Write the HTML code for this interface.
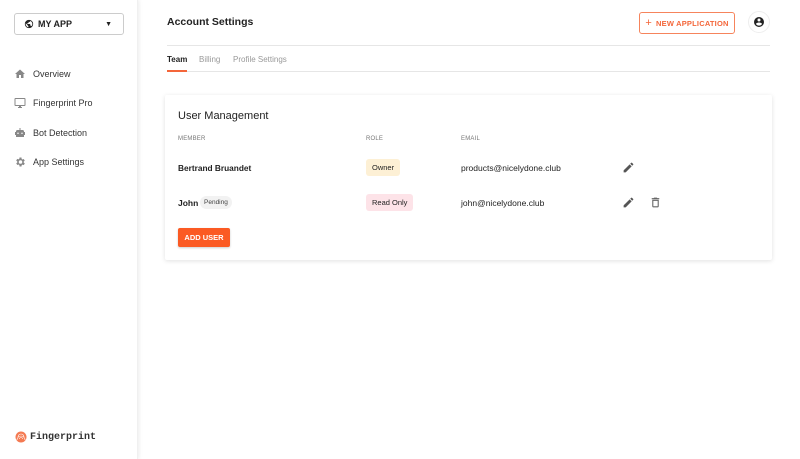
<!DOCTYPE html>
<html><head><style>
*{box-sizing:border-box;margin:0;padding:0}
body{width:800px;height:459px;position:relative;background:#fff;font-family:"Liberation Sans",sans-serif;color:#222;overflow:hidden}
.a{position:absolute}
.side{left:0;top:0;width:138px;height:459px;background:#fff;box-shadow:1px 0 4px rgba(0,0,0,.08);border-right:1px solid #f0f0f0}
.sel{left:14px;top:13px;width:110px;height:22px;border:1px solid #ccc;border-radius:3px;font-size:9px;font-weight:bold;display:flex;align-items:center;padding-left:9px}
.nav{left:14px;font-size:9px;color:#333;display:flex;align-items:center}
.nav svg{margin-right:7px}
.th{font-size:6px;color:#777;top:136px;letter-spacing:.2px}
.row{font-size:8.5px}
.chip{font-size:7.5px;padding:4px 6px;border-radius:3px}
</style></head><body>
<div class="a side"></div>
<div class="a sel"><svg width="10" height="10" viewBox="0 0 24 24"><path fill="#222" d="M12 2a10 10 0 100 20 10 10 0 000-20zm-1 17.9A8 8 0 014 12c0-.6.1-1.2.2-1.8L9 15v1a2 2 0 002 2v1.9zm6.9-2.5A2 2 0 0016 16h-1v-3a1 1 0 00-1-1H8v-2h2a1 1 0 001-1V7h2a2 2 0 002-2v-.4a8 8 0 012.9 12.8z"/></svg><span style="margin-left:4px">MY APP</span><span style="margin-left:auto;margin-right:11px;font-size:7px">▼</span></div>
<div class="a nav" style="top:68px"><svg width="12" height="12" viewBox="0 0 24 24"><path fill="#888" d="M10 20v-6h4v6h5v-8h3L12 3 2 12h3v8z"/></svg>Overview</div>
<div class="a nav" style="top:97px"><svg width="12" height="12" viewBox="0 0 24 24"><path fill="#888" d="M21 2H3a2 2 0 00-2 2v12a2 2 0 002 2h7v2H8v2h8v-2h-2v-2h7a2 2 0 002-2V4a2 2 0 00-2-2zm0 14H3V4h18z"/></svg>Fingerprint Pro</div>
<div class="a nav" style="top:127px"><svg width="12" height="12" viewBox="0 0 24 24"><path fill="#888" d="M11 2h2v4h4a3 3 0 013 3v1h2v6h-2v4H4v-4H2v-6h2V9a3 3 0 013-3h4zM8 11a1.5 1.5 0 100 3 1.5 1.5 0 000-3zm8 0a1.5 1.5 0 100 3 1.5 1.5 0 000-3z"/></svg>Bot Detection</div>
<div class="a nav" style="top:156px"><svg width="12" height="12" viewBox="0 0 24 24"><path fill="#888" d="M19.4 13a7 7 0 000-2l2.1-1.6-2-3.5-2.5 1a7 7 0 00-1.7-1L15 3h-4l-.4 2.7a7 7 0 00-1.7 1l-2.5-1-2 3.5L6.6 11a7 7 0 000 2l-2.1 1.6 2 3.5 2.5-1a7 7 0 001.7 1L11 21h4l.4-2.7a7 7 0 001.7-1l2.5 1 2-3.5zM13 15.5a3.5 3.5 0 110-7 3.5 3.5 0 010 7z"/></svg>App Settings</div>
<div class="a" style="left:15px;top:431px;display:flex;align-items:center;font-family:'Liberation Mono',monospace;font-size:10px;font-weight:bold;color:#333"><svg width="12" height="12" viewBox="0 0 12 12"><circle cx="6" cy="6" r="5.5" fill="#f47a52"/><path d="M3 6a3 3 0 016 0M4.5 8a1.5 1.5 0 013 0M2 9a4 4 0 018 0" stroke="#fff" stroke-width=".6" fill="none"/></svg><span style="margin-left:3px">Fingerprint</span></div>

<div class="a" style="left:167px;top:16px;font-size:10.5px;font-weight:bold;color:#222">Account Settings</div>
<div class="a" style="left:639px;top:12px;width:96px;height:22px;border:1px solid #f6845c;border-radius:3px;color:#f4663a;font-size:7.5px;font-weight:bold;display:flex;align-items:center;justify-content:center;letter-spacing:.2px"><span style="font-size:11px;margin-right:4px;font-weight:normal">+</span>NEW APPLICATION</div>
<div class="a" style="left:748px;top:11px;width:22px;height:22px;border-radius:50%;border:1px solid #eee;display:flex;align-items:center;justify-content:center"><svg width="12" height="12" viewBox="0 0 24 24"><path fill="#222" d="M12 2a10 10 0 100 20 10 10 0 000-20zm0 3a3 3 0 110 6 3 3 0 010-6zm0 14.2a7.2 7.2 0 01-6-3.2c0-2 4-3.1 6-3.1s6 1.1 6 3.1a7.2 7.2 0 01-6 3.2z"/></svg></div>
<div class="a" style="left:167px;top:45px;width:603px;height:1px;background:#e6e6e6"></div>
<div class="a" style="left:167px;top:55px;font-size:8px;font-weight:bold">Team</div>
<div class="a" style="left:199px;top:55px;font-size:8px;color:#999">Billing</div>
<div class="a" style="left:233px;top:55px;font-size:8px;color:#999">Profile Settings</div>
<div class="a" style="left:167px;top:71px;width:603px;height:1px;background:#e6e6e6"></div>
<div class="a" style="left:167px;top:70px;width:20px;height:2px;background:#f4663a"></div>

<div class="a" style="left:165px;top:95px;width:607px;height:165px;background:#fff;box-shadow:0 1px 5px rgba(0,0,0,.12);border-radius:2px"></div>
<div class="a" style="left:178px;top:110px;font-size:11px;color:#222">User Management</div>
<div class="a th" style="left:178px">MEMBER</div>
<div class="a th" style="left:366px">ROLE</div>
<div class="a th" style="left:461px">EMAIL</div>
<div class="a row" style="left:178px;top:163px;font-weight:bold;font-size:8.3px">Bertrand Bruandet</div>
<div class="a chip" style="left:366px;top:159px;background:#fdf0d5">Owner</div>
<div class="a row" style="left:461px;top:163px">products@nicelydone.club</div>
<div class="a row" style="left:178px;top:198px;font-weight:bold">John</div>
<div class="a" style="left:200px;top:196px;font-size:6.5px;background:#f2f2f2;border-radius:7px;padding:3px 4px;color:#444">Pending</div>
<div class="a chip" style="left:366px;top:194px;background:#fde3e8">Read Only</div>
<div class="a row" style="left:461px;top:198px">john@nicelydone.club</div>
<svg class="a" style="left:622px;top:161px" width="13" height="13" viewBox="0 0 24 24"><path fill="#555" d="M3 17.2V21h3.8L17.8 9.9l-3.7-3.7zM20.7 7a1 1 0 000-1.4l-2.3-2.3a1 1 0 00-1.4 0l-1.8 1.8 3.7 3.7z"/></svg>
<svg class="a" style="left:622px;top:196px" width="13" height="13" viewBox="0 0 24 24"><path fill="#555" d="M3 17.2V21h3.8L17.8 9.9l-3.7-3.7zM20.7 7a1 1 0 000-1.4l-2.3-2.3a1 1 0 00-1.4 0l-1.8 1.8 3.7 3.7z"/></svg>
<svg class="a" style="left:649px;top:196px" width="13" height="13" viewBox="0 0 24 24"><path fill="#666" d="M6 19a2 2 0 002 2h8a2 2 0 002-2V7H6zm2-10h8v10H8zm7.5-5l-1-1h-5l-1 1H5v2h14V4z"/></svg>
<div class="a" style="left:178px;top:228px;width:52px;height:19px;background:#fb5a23;border-radius:2px;color:#fff;font-size:7.5px;font-weight:bold;display:flex;align-items:center;justify-content:center;box-shadow:0 1px 2px rgba(0,0,0,.2)">ADD USER</div>
</body></html>
